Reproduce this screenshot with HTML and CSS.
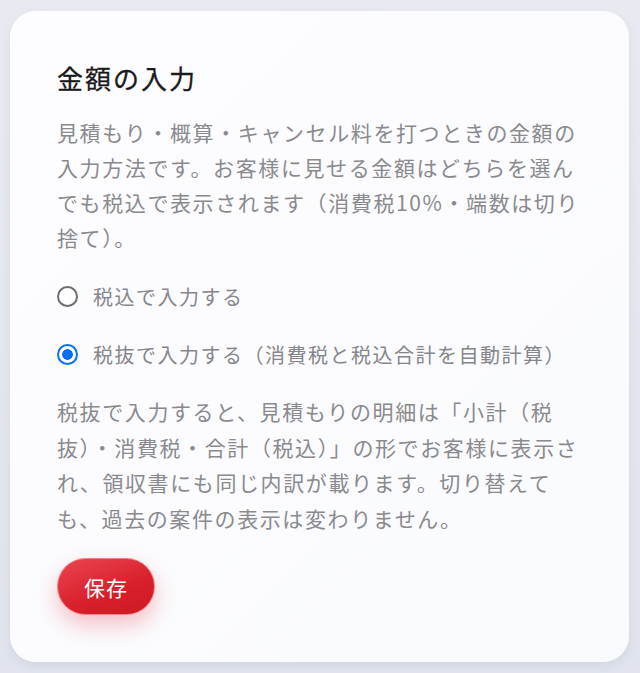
FILE: index.html
```html
<!DOCTYPE html>
<html lang="ja">
<head>
<meta charset="utf-8">
<link rel="stylesheet" href="styles.css">
</head>
<body>
<main class="card">
  <h1 class="title">金額の入力</h1>
  <p class="desc">見積もり・概算・キャンセル料を打つときの金額の入力方法です。お客様に見せる金額はどちらを選んでも税込で表示されます（消費税10%・端数は切り捨て）。</p>
  <div class="options">
    <label class="option">
      <span class="radio"></span>
      <span class="label">税込で入力する</span>
    </label>
    <label class="option">
      <span class="radio checked"></span>
      <span class="label">税抜で入力する（消費税と税込合計を自動計算）</span>
    </label>
  </div>
  <p class="note">税抜で入力すると、見積もりの明細は「小計（税抜）・消費税・合計（税込）」の形でお客様に表示され、領収書にも同じ内訳が載ります。切り替えても、過去の案件の表示は変わりません。</p>
  <button class="save">保存</button>
</main>
</body>
</html>
```
FILE: styles.css
```css
html, body {
  margin: 0;
  height: 100%;
}
body {
  background: linear-gradient(180deg, #e9eaf1 0%, #e1e4ec 100%);
  padding: 11px 11px 0 10px;
  box-sizing: border-box;
  font-family: "Noto Sans CJK JP", "Noto Sans", sans-serif;
}
.card {
  width: 619px;
  height: 651px;
  box-sizing: border-box;
  background: linear-gradient(135deg, #fdfdff 0%, #f9fafd 100%);
  border-radius: 26px;
  box-shadow: 0 4px 10px rgba(140, 150, 180, 0.18);
  padding: 50px 40px 47px 47px;
  display: flex;
  flex-direction: column;
  align-items: flex-start;
}
.title {
  margin: 0;
  font-size: 26px;
  line-height: 34px;
  font-weight: 400;
  letter-spacing: 2px;
  color: #1a1a1c;
  -webkit-text-stroke: 0.3px #1a1a1c;
}
.desc, .note {
  margin: 20px 0 0;
  font-size: 21px;
  line-height: 35px;
  letter-spacing: 1.6px;
  color: #8a8a8e;
  width: 528px;
}
.note {
  margin-top: 22px;
  line-height: 35.6px;
}
.options {
  margin-top: 24px;
  display: flex;
  flex-direction: column;
  gap: 23px;
}
.option {
  display: flex;
  align-items: center;
  height: 35px;
  gap: 15px;
}
.radio {
  width: 21px;
  height: 21px;
  box-sizing: border-box;
  border: 2px solid #6c6c70;
  border-radius: 50%;
  background: #fff;
}
.radio.checked {
  border: 2.5px solid #0a6ff0;
  background: radial-gradient(circle, #0a6ff0 0 5px, #fff 5.6px);
}
.label {
  font-size: 20px;
  letter-spacing: 1.5px;
  color: #86868b;
}
.save {
  margin-top: 22px;
  width: 98px;
  height: 57px;
  border-radius: 29px;
  border: 1px solid rgba(255, 150, 155, 0.8);
  background: linear-gradient(160deg, #ea4550 0%, #d81f2b 60%, #cc1a25 100%);
  color: #fff;
  font-family: inherit;
  font-size: 21px;
  letter-spacing: 1px;
  box-shadow: 0 10px 22px rgba(225, 40, 55, 0.28);
  padding: 0;
}
```
